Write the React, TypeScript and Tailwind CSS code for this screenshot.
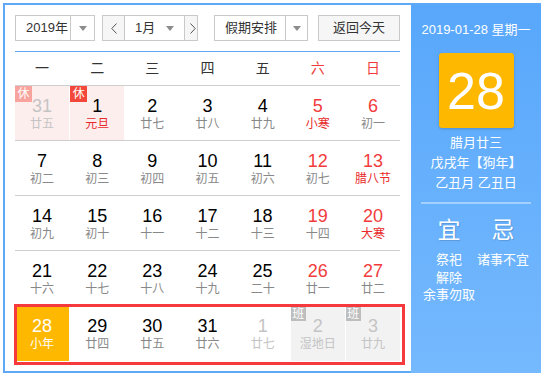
import React from "react";

type Day = {
  n: number;
  l: string;
  weekend?: boolean;
  fest?: boolean;
  other?: boolean;
  xiu?: "on" | "faded";
  ban?: boolean;
  today?: boolean;
};

const rows: Day[][] = [
  [
    { n: 31, l: "廿五", other: true, xiu: "faded" },
    { n: 1, l: "元旦", fest: true, xiu: "on" },
    { n: 2, l: "廿七" },
    { n: 3, l: "廿八" },
    { n: 4, l: "廿九" },
    { n: 5, l: "小寒", weekend: true, fest: true },
    { n: 6, l: "初一", weekend: true },
  ],
  [
    { n: 7, l: "初二" },
    { n: 8, l: "初三" },
    { n: 9, l: "初四" },
    { n: 10, l: "初五" },
    { n: 11, l: "初六" },
    { n: 12, l: "初七", weekend: true },
    { n: 13, l: "腊八节", weekend: true, fest: true },
  ],
  [
    { n: 14, l: "初九" },
    { n: 15, l: "初十" },
    { n: 16, l: "十一" },
    { n: 17, l: "十二" },
    { n: 18, l: "十三" },
    { n: 19, l: "十四", weekend: true },
    { n: 20, l: "大寒", weekend: true, fest: true },
  ],
  [
    { n: 21, l: "十六" },
    { n: 22, l: "十七" },
    { n: 23, l: "十八" },
    { n: 24, l: "十九" },
    { n: 25, l: "二十" },
    { n: 26, l: "廿一", weekend: true },
    { n: 27, l: "廿二", weekend: true },
  ],
  [
    { n: 28, l: "小年", today: true },
    { n: 29, l: "廿四" },
    { n: 30, l: "廿五" },
    { n: 31, l: "廿六" },
    { n: 1, l: "廿七", other: true },
    { n: 2, l: "湿地日", other: true, ban: true },
    { n: 3, l: "廿九", other: true, ban: true },
  ],
];

const weekdays = ["一", "二", "三", "四", "五", "六", "日"];

const Caret = () => (
  <span className="w-0 h-0 border-x-[4px] border-x-transparent border-t-[5px] border-t-[#8c8c8c]" />
);

const DayCell: React.FC<{ d: Day }> = ({ d }) => {
  let bg = "bg-white";
  if (d.xiu) bg = "bg-[#fdeeee]";
  if (d.ban) bg = "bg-[#f2f2f2]";
  if (d.today) bg = "bg-[#ffb800]";

  let numColor = d.weekend ? "text-[#f23c3c]" : "text-black";
  let lunarColor = d.fest ? "text-[#e82a2a]" : "text-[#888]";
  if (d.other) {
    numColor = "text-[#c4c4c4]";
    lunarColor = "text-[#c4c4c4]";
  }
  if (d.today) {
    numColor = "text-white";
    lunarColor = "text-white";
  }

  return (
    <div className={`relative flex flex-col items-center pt-[10px] ${bg}`}>
      {d.xiu && (
        <span
          className={`absolute left-0 top-0 w-[17px] h-[16px] flex items-center justify-center text-[12px] leading-none text-white ${
            d.xiu === "on" ? "bg-[#f2473a]" : "bg-[#f8a39d]"
          }`}
        >
          休
        </span>
      )}
      {d.ban && (
        <span className="absolute left-0 top-0 w-[15px] h-[15px] flex items-center justify-center text-[12px] leading-none text-white bg-[#bdbdbd]">
          班
        </span>
      )}
      <span className={`text-[18px] leading-[20px] ${numColor}`}>{d.n}</span>
      <span className={`text-[12px] leading-[16px] ${lunarColor}`}>{d.l}</span>
    </div>
  );
};

export default function App() {
  return (
    <div className="font-['Liberation_Sans','Noto_Sans_CJK_SC',sans-serif] bg-white w-[545px] h-[378px] pt-[3px] pl-[3px]">
      <div className="w-[538px] h-[370px] border-2 border-[#5ea9f7] flex">
        {/* calendar side */}
        <div className="w-[406px] pl-[10px] pr-[11px] pt-[10px]">
          <div className="flex h-[26px] text-[13px] text-[#333]">
            <div className="w-[80px] flex border border-[#c9c9c9]">
              <span className="w-[54px] pl-[10px] flex items-center">2019年</span>
              <span className="flex-1 border-l border-[#c9c9c9] flex items-center justify-center">
                <Caret />
              </span>
            </div>
            <button className="ml-[7px] w-[23px] border border-[#c9c9c9] bg-[#f6f6f6] flex items-center justify-center">
              <svg width="6" height="11" viewBox="0 0 6 11">
                <polyline points="5.5,0.5 0.8,5.5 5.5,10.5" fill="none" stroke="#555" strokeWidth="1" />
              </svg>
            </button>
            <div className="w-[59px] flex items-center border-y border-[#c9c9c9]">
              <span className="pl-[10px]">1月</span>
              <span className="ml-auto mr-[10px] flex">
                <Caret />
              </span>
            </div>
            <button className="w-[14px] border border-[#c9c9c9] bg-[#f6f6f6] flex items-center justify-end pr-[1px]">
              <svg width="6" height="11" viewBox="0 0 6 11">
                <polyline points="0.5,0.5 5.2,5.5 0.5,10.5" fill="none" stroke="#555" strokeWidth="1" />
              </svg>
            </button>
            <div className="ml-[16px] w-[94px] flex border border-[#c9c9c9]">
              <span className="w-[70px] pl-[10px] flex items-center">假期安排</span>
              <span className="flex-1 border-l border-[#c9c9c9] flex items-center justify-center">
                <Caret />
              </span>
            </div>
            <button className="ml-[10px] w-[82px] border border-[#c9c9c9] bg-[#f6f6f6] flex items-center justify-center">
              返回今天
            </button>
          </div>

          <div className="mt-[10px] h-px bg-[#5ea9f7]" />

          <div className="grid grid-cols-7 gap-x-px h-[34px] border-b border-[#cfcfcf] text-[14px]">
            {weekdays.map((w, i) => (
              <div
                key={w}
                className={`flex items-center justify-center ${i >= 5 ? "text-[#f23c3c]" : "text-[#333]"}`}
              >
                {w}
              </div>
            ))}
          </div>

          {rows.map((r, ri) => (
            <div
              key={ri}
              className={`relative grid grid-cols-7 gap-x-px h-[55px] ${
                ri < rows.length - 1 ? "border-b border-[#cfcfcf]" : ""
              }`}
            >
              {r.map((d, di) => (
                <DayCell key={di} d={d} />
              ))}
              {ri === rows.length - 1 && (
                <div className="absolute -left-px -right-[5px] -top-[2px] -bottom-[4px] border-[3px] border-[#f5393c] pointer-events-none" />
              )}
            </div>
          ))}
        </div>

        {/* info side */}
        <div className="flex-1 -mr-[2px] -mb-[2px] bg-gradient-to-b from-[#58a7fb] to-[#75b9fe] text-white flex flex-col items-center pt-[17px]">
          <div className="text-[13px] leading-[16px]">2019-01-28 星期一</div>
          <div className="mt-[15px] w-[75px] h-[75px] rounded-[3px] bg-[#ffb800] shadow-[0_1px_3px_rgba(0,0,0,0.18)] flex items-center justify-center text-[52px] leading-none">
            28
          </div>
          <div className="mt-[5px] text-[13px] leading-[20px] text-center">
            <div>腊月廿三</div>
            <div>戊戌年【狗年】</div>
            <div>乙丑月 乙丑日</div>
          </div>
          <div className="mt-[9px] w-[110px] h-[2px] bg-white/40" />
          <div className="mt-[13px] w-[108px] grid grid-cols-2 text-[13px] leading-[17.5px]">
            <div className="flex flex-col items-center">
              <span className="text-[23px] leading-[26px] mb-[8px] [text-shadow:1px_1px_1px_rgba(0,0,0,0.15)]">宜</span>
              <span>祭祀</span>
              <span>解除</span>
              <span className="whitespace-nowrap">余事勿取</span>
            </div>
            <div className="flex flex-col items-center">
              <span className="text-[23px] leading-[26px] mb-[8px] [text-shadow:1px_1px_1px_rgba(0,0,0,0.15)]">忌</span>
              <span className="whitespace-nowrap">诸事不宜</span>
            </div>
          </div>
        </div>
      </div>
    </div>
  );
}
